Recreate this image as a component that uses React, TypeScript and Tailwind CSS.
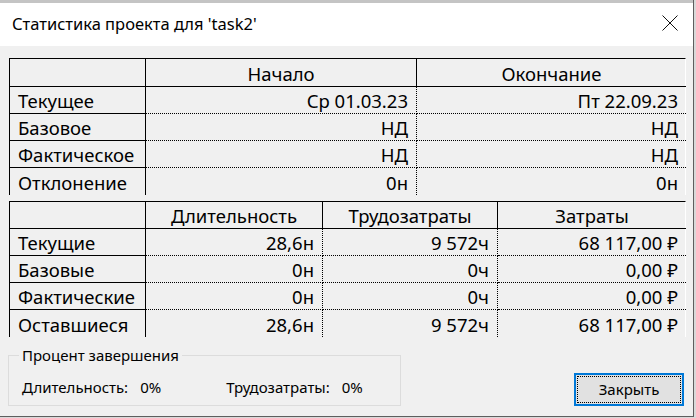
import React from 'react';

const font = { fontFamily: '"Noto Sans", "DejaVu Sans", sans-serif' };

type Row = { label: string; values: string[] };

const dateRows: Row[] = [
  { label: 'Текущее', values: ['Ср 01.03.23', 'Пт 22.09.23'] },
  { label: 'Базовое', values: ['НД', 'НД'] },
  { label: 'Фактическое', values: ['НД', 'НД'] },
  { label: 'Отклонение', values: ['0н', '0н'] },
];

const workRows: Row[] = [
  { label: 'Текущие', values: ['28,6н', '9 572ч', '68 117,00 ₽'] },
  { label: 'Базовые', values: ['0н', '0ч', '0,00 ₽'] },
  { label: 'Фактические', values: ['0н', '0ч', '0,00 ₽'] },
  { label: 'Оставшиеся', values: ['28,6н', '9 572ч', '68 117,00 ₽'] },
];

const StatTable = ({
  cols,
  headers,
  rows,
  headerHeight,
}: {
  cols: string;
  headers: string[];
  rows: Row[];
  headerHeight: string;
}) => {
  return (
    <div className={`grid ${cols} border-l border-t border-r border-l-black border-t-black border-r-white text-[18.5px] text-black`}>
      <div className={`${headerHeight} border-r border-b border-black`} />
      {headers.map((h, i) => (
        <div
          key={h}
          className={`${headerHeight} flex items-end justify-center pb-[1px] leading-[22px] border-b border-black ${
            i < headers.length - 1 ? 'border-r' : ''
          }`}
        >
          {h}
        </div>
      ))}
      {rows.map((row, r) => {
        const last = r === rows.length - 1;
        return (
          <React.Fragment key={row.label}>
            <div
              className={`h-[27px] flex items-end pl-[8px] pb-[1px] leading-[22px] border-r border-black ${
                last ? 'h-[26px]' : 'border-b'
              }`}
            >
              {row.label}
            </div>
            {row.values.map((v, i) => (
              <div
                key={i}
                className={`h-[27px] flex items-end justify-end pr-[8px] pb-[1px] leading-[22px] border-black border-dotted ${
                  last ? 'h-[26px]' : 'border-b'
                } ${i < row.values.length - 1 ? 'border-r' : ''}`}
              >
                {v}
              </div>
            ))}
          </React.Fragment>
        );
      })}
    </div>
  );
};

export default function App() {
  return (
    <div className="w-[696px] h-[418px] bg-[#d9d9d9] overflow-hidden" style={font}>
      <div className="w-[694px] h-[417px] flex flex-col bg-[#f0f0f0] border-r border-b border-[#5e5e5e]">
        <div className="h-[3px] bg-[#c4c4c4]" />
        <div className="h-[43px] bg-white flex items-center justify-between pl-[12px] pr-[15px]">
          <span className="text-[16.5px] text-black leading-none -mt-[1px]">Статистика проекта для 'task2'</span>
          <svg width="16" height="16" viewBox="0 0 16 16" className="-mt-[3px]">
            <path d="M0.5 0.5 L15.5 15.5 M15.5 0.5 L0.5 15.5" stroke="#111" strokeWidth="1" fill="none" />
          </svg>
        </div>
        <div className="flex flex-col pl-[9px] pt-[12px] pr-[7px]">
          <StatTable
            cols="grid-cols-[136px_271px_269px]"
            headers={['Начало', 'Окончание']}
            rows={dateRows}
            headerHeight="h-[28px]"
          />
          <div className="h-[6px]" />
          <StatTable
            cols="grid-cols-[136px_177px_175px_188px]"
            headers={['Длительность', 'Трудозатраты', 'Затраты']}
            rows={workRows}
            headerHeight="h-[27px]"
          />
        </div>
        <div className="flex items-start justify-between pl-[8px] pr-[9px] mt-[17px]">
          <div className="relative w-[393px] h-[51px] border border-[#dcdcdc] mt-[1px]">
            <span className="absolute left-[10px] -top-[11px] px-[3px] bg-[#f0f0f0] text-[15px] leading-[20px] text-black">
              Процент завершения
            </span>
            <div className="flex items-center text-[15px] text-black pt-[20px] pl-[13px]">
              <span>Длительность:</span>
              <span className="ml-[12px] w-[86px]">0%</span>
              <span>Трудозатраты:</span>
              <span className="ml-[12px]">0%</span>
            </div>
          </div>
          <button className="w-[110px] h-[33px] mt-[19px] border-2 border-[#0078d7] bg-[#e1e1e1] p-[1px]">
            <div className="w-full h-full border border-dotted border-black flex items-center justify-center text-[15px] text-black">
              Закрыть
            </div>
          </button>
        </div>
      </div>
    </div>
  );
}
